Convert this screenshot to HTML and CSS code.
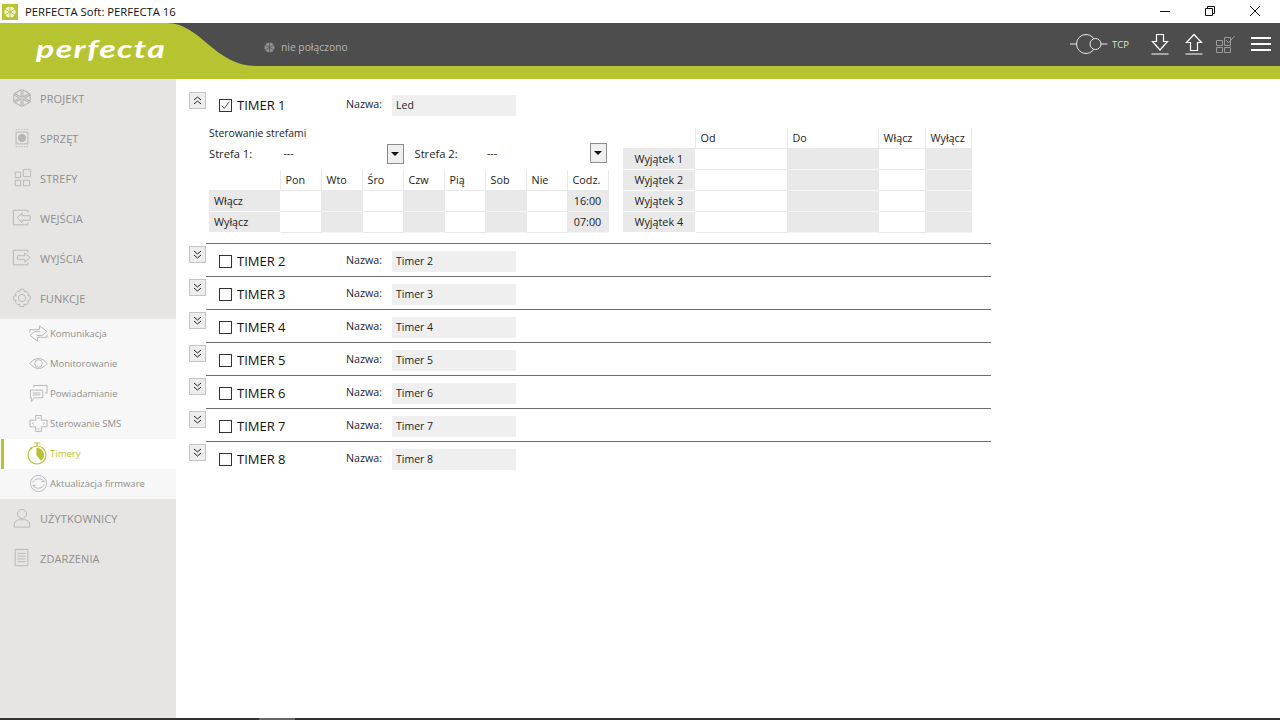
FILE: index.html
```html
<!DOCTYPE html>
<html lang="pl">
<head>
    <meta charset="UTF-8">
    <title>PERFECTA Soft: PERFECTA 16</title>
    <link rel="stylesheet" href="styles.css">
</head>
<body>
    <div class="titlebar">
        <svg class="app-icon" viewBox="0 0 16 16"><rect width="16" height="16" fill="#b7c431"/><circle cx="8" cy="8" r="5.6" fill="#f3f5d8"/><path d="M8 2v12M3 5l10 6M13 5L3 11" stroke="#b7c431" stroke-width="1"/></svg>
        <span class="title-text">PERFECTA Soft: PERFECTA 16</span>
        <div class="win-btns">
            <svg width="12" height="12" viewBox="0 0 12 12"><path d="M1 6.5h10" stroke="#111" fill="none"/></svg>
            <svg width="12" height="12" viewBox="0 0 12 12"><path d="M1.500 3.500h7v7h-7zM3.500 3.500v-2h7v7h-2" stroke="#111" fill="none"/></svg>
            <svg width="12" height="12" viewBox="0 0 12 12"><path d="M1 1l10 10M11 1L1 11" stroke="#111" fill="none"/></svg>
        </div>
    </div>

    <div class="header">
        <svg class="header-curve" width="100%" height="56" viewBox="0 0 1280 56" preserveAspectRatio="none"><path d="M0 0H167C200 0 215 43 256 43H1280V56H0Z" fill="#b7c431"/></svg>
        <div class="logo">perfecta</div>
        <div class="status">
            <svg width="11" height="11" viewBox="0 0 12 12"><circle cx="6" cy="6" r="5.500" fill="#8e8e8e"/><path d="M6 0v12M1 3l10 6M11 3L1 9" stroke="#4d4d4d" stroke-width=".7"/></svg>
            <span>nie połączono</span>
        </div>
        <div class="tools">
            <svg class="tcp-icon" width="38" height="22" viewBox="0 0 38 22" fill="none" stroke="#e8e8e8"><path d="M0 11h6"/><circle cx="16" cy="11" r="9.500"/><circle cx="25.500" cy="11" r="5.500" fill="#4d4d4d"/><path d="M31 11h6.500"/></svg>
            <span class="tcp">TCP</span>
            <svg class="tool" width="20" height="22" viewBox="0 0 20 22" fill="none" stroke="#fff" stroke-width="1.2"><path d="M6.500 1.500h7v7h4L10 17 2.500 8.500h4zM1.500 21h17"/></svg>
            <svg class="tool" width="20" height="22" viewBox="0 0 20 22" fill="none" stroke="#fff" stroke-width="1.2"><path d="M6.500 17.500h7v-8h4L10 1.500 2.500 9.500h4zM1.500 21h17"/></svg>
            <svg class="tool dim" width="20" height="18" viewBox="0 0 20 18" fill="none" stroke="#9a9a9a"><path d="M.5 5.500h6v5h-6zM.5 12.500h6v5h-6zM8.500 12.500h6v5h-6zM8.500 2.500h6v8h-6zM10 5l2.500 3 6-7" /></svg>
            <div class="burger"><i></i><i></i><i></i></div>
        </div>
    </div>

    <div class="main">
        <nav class="sidebar">
            <a class="nav-item">
                <svg viewBox="0 0 22 22" fill="none" stroke="#b5b5b5" stroke-width="1.2"><path d="M10 2L3 6l7 4zM12 2l7 4-7 4zM2 7.500v7l6-3.500zM20 7.500v7l-6-3.500zM10 12l-7 4 7 4zM12 12l7 4-7 4z"/></svg>
                PROJEKT
            </a>
            <a class="nav-item">
                <svg viewBox="0 0 22 22" fill="none" stroke="#b5b5b5"><rect x="4.500" y="4.500" width="13" height="13"/><circle cx="11" cy="11" r="4" fill="#b5b5b5"/><path d="M4 1.500h14M4 20.500h14" stroke-dasharray="1.500 1.500"/></svg>
                SPRZĘT
            </a>
            <a class="nav-item">
                <svg viewBox="0 0 22 22" fill="none" stroke="#b5b5b5"><path d="M3.500 4.500h6v6h-6zM12.500 1.500h8v8h-8zM3.500 13.500h6v6h-6zM12.500 13.500h7v6h-7z"/></svg>
                STREFY
            </a>
            <a class="nav-item">
                <svg viewBox="0 0 22 22" fill="none" stroke="#b5b5b5"><path d="M17.500 5V2.500h-16v16h16V16M6 10.500l5-5v3h9v5h-9v3z" /></svg>
                WEJŚCIA
            </a>
            <a class="nav-item">
                <svg viewBox="0 0 22 22" fill="none" stroke="#b5b5b5"><path d="M17.500 5V2.500h-16v16h16V16M6 8.500h8v-3l6 5-6 5v-3H6z"/></svg>
                WYJŚCIA
            </a>
            <a class="nav-item">
                <svg viewBox="0 0 22 22" fill="none" stroke="#b5b5b5"><circle cx="11" cy="11" r="4"/><path d="M9 1.500h4l.6 2.800 2-.9 2.700 2.700-1 2 2.700.9v4l-2.700.7 1 2.200-2.700 2.700-2-1-.6 2.800H9l-.7-2.800-2 1-2.700-2.700 1-2.200-2.700-.7v-4l2.700-.9-1-2 2.700-2.700 2 .9z"/></svg>
                FUNKCJE
            </a>
            <div class="subnav">
                <a class="sub-item">
                    <svg viewBox="0 0 20 20" fill="none" stroke="#b5b5b5"><path d="M1 9V6h10V2l8 6-5 4H8"/><path d="M19 11v3H9v4l-8-6 5-4h6"/></svg>
                    Komunikacja
                </a>
                <a class="sub-item">
                    <svg viewBox="0 0 20 20" fill="none" stroke="#b5b5b5"><path d="M1 10c5-7 13-7 18 0-5 7-13 7-18 0z"/><circle cx="10" cy="10" r="4"/></svg>
                    Monitorowanie
                </a>
                <a class="sub-item">
                    <svg viewBox="0 0 20 20" fill="none" stroke="#b5b5b5"><path d="M1.500 6.500h13v8h-9l-3 4v-4h-1zM5 3.500V1.500h14v8h-2M4 9.500h8M4 11.500h8"/></svg>
                    Powiadamianie
                </a>
                <a class="sub-item">
                    <svg viewBox="0 0 20 20" fill="none" stroke="#b5b5b5"><path d="M7 1.500h6v5h6v7h-6v5H7v-5H1v-7h6z"/><path d="M9 5l1-1.500L11 5M9 15l1 1.500 1-1.500M5 9l-1.500 1L5 11M15 9l1.500 1L15 11"/></svg>
                    Sterowanie SMS
                </a>
                <a class="sub-item active">
                    <svg viewBox="0 0 20 23" fill="none" stroke="#b7c431" stroke-width="1.200"><circle cx="10" cy="13" r="9"/><path d="M7 1h6M10 1v3M3.500 5.500l1.500 1.500"/><path d="M10 6.500a6.500 6.500 0 0 1 4 11.500L10 13z" fill="#b7c431"/></svg>
                    Timery
                </a>
                <a class="sub-item">
                    <svg viewBox="0 0 20 20" fill="none" stroke="#b5b5b5"><circle cx="10" cy="10" r="8.500"/><path d="M4 9c1-4 9-6 12-1l-3 0M16 11c-1 4-9 6-12 1l3 0"/></svg>
                    Aktualizacja firmware
                </a>
            </div>
            <a class="nav-item">
                <svg viewBox="0 0 22 22" fill="none" stroke="#b5b5b5"><circle cx="11" cy="6.500" r="5"/><path d="M2.500 21v-3c0-3 3-5 5-5h7c2 0 5 2 5 5v3z"/></svg>
                UŻYTKOWNICY
            </a>
            <a class="nav-item">
                <svg viewBox="0 0 22 22" fill="none" stroke="#b5b5b5"><path d="M3.500 1.500h14v18h-14zM6 6h9M6 9h9M6 12h9M6 15h9"/></svg>
                ZDARZENIA
            </a>
        </nav>

        <section class="content">
            <div class="timer open">
                <div class="toggle">
                    <svg viewBox="0 0 9 9" fill="none" stroke="#222"><path d="M1 4l3.500-3L8 4M1 8l3.500-3L8 8"/></svg>
                </div>
                <div class="timer-body">
                    <div class="timer-head first">
                        <span class="check on"><svg viewBox="0 0 13 13" fill="none" stroke="#333"><path d="M2 6.500l3 3.500 6-8"/></svg></span>
                        <span class="timer-name">TIMER 1</span>
                        <span class="name-label">Nazwa:</span>
                        <span class="name-input">Led</span>
                    </div>
                    <div class="details">
                        <div class="zones">
                            <div class="zones-title">Sterowanie strefami</div>
                            <div class="zone-row">
                                <span class="zone-label">Strefa 1:</span>
                                <span class="zone-value">---</span>
                                <span class="drop"></span>
                                <span class="zone-label second">Strefa 2:</span>
                                <span class="zone-value">---</span>
                                <span class="drop up"></span>
                            </div>
                            <table class="grid week">
                                <tr><th></th><th>Pon</th><th>Wto</th><th>Śro</th><th>Czw</th><th>Pią</th><th>Sob</th><th>Nie</th><th>Codz.</th></tr>
                                <tr><td class="lbl">Włącz</td><td></td><td class="g"></td><td></td><td class="g"></td><td></td><td class="g"></td><td></td><td class="g tc">16:00</td></tr>
                                <tr><td class="lbl">Wyłącz</td><td></td><td class="g"></td><td></td><td class="g"></td><td></td><td class="g"></td><td></td><td class="g tc">07:00</td></tr>
                            </table>
                        </div>
                        <table class="grid except">
                            <tr><th></th><th>Od</th><th>Do</th><th>Włącz</th><th>Wyłącz</th></tr>
                            <tr><td class="lbl tc">Wyjątek 1</td><td></td><td class="g"></td><td></td><td class="g"></td></tr>
                            <tr><td class="lbl tc">Wyjątek 2</td><td></td><td class="g"></td><td></td><td class="g"></td></tr>
                            <tr><td class="lbl tc">Wyjątek 3</td><td></td><td class="g"></td><td></td><td class="g"></td></tr>
                            <tr><td class="lbl tc">Wyjątek 4</td><td></td><td class="g"></td><td></td><td class="g"></td></tr>
                        </table>
                    </div>
                </div>
            </div>

            <div class="timer"><div class="toggle"><svg viewBox="0 0 9 9" fill="none" stroke="#222"><path d="M1 1l3.500 3L8 1M1 5l3.500 3L8 5"/></svg></div><div class="timer-body"><div class="timer-head"><span class="check"></span><span class="timer-name">TIMER 2</span><span class="name-label">Nazwa:</span><span class="name-input">Timer 2</span></div></div></div>
            <div class="timer"><div class="toggle"><svg viewBox="0 0 9 9" fill="none" stroke="#222"><path d="M1 1l3.500 3L8 1M1 5l3.500 3L8 5"/></svg></div><div class="timer-body"><div class="timer-head"><span class="check"></span><span class="timer-name">TIMER 3</span><span class="name-label">Nazwa:</span><span class="name-input">Timer 3</span></div></div></div>
            <div class="timer"><div class="toggle"><svg viewBox="0 0 9 9" fill="none" stroke="#222"><path d="M1 1l3.500 3L8 1M1 5l3.500 3L8 5"/></svg></div><div class="timer-body"><div class="timer-head"><span class="check"></span><span class="timer-name">TIMER 4</span><span class="name-label">Nazwa:</span><span class="name-input">Timer 4</span></div></div></div>
            <div class="timer"><div class="toggle"><svg viewBox="0 0 9 9" fill="none" stroke="#222"><path d="M1 1l3.500 3L8 1M1 5l3.500 3L8 5"/></svg></div><div class="timer-body"><div class="timer-head"><span class="check"></span><span class="timer-name">TIMER 5</span><span class="name-label">Nazwa:</span><span class="name-input">Timer 5</span></div></div></div>
            <div class="timer"><div class="toggle"><svg viewBox="0 0 9 9" fill="none" stroke="#222"><path d="M1 1l3.500 3L8 1M1 5l3.500 3L8 5"/></svg></div><div class="timer-body"><div class="timer-head"><span class="check"></span><span class="timer-name">TIMER 6</span><span class="name-label">Nazwa:</span><span class="name-input">Timer 6</span></div></div></div>
            <div class="timer"><div class="toggle"><svg viewBox="0 0 9 9" fill="none" stroke="#222"><path d="M1 1l3.500 3L8 1M1 5l3.500 3L8 5"/></svg></div><div class="timer-body"><div class="timer-head"><span class="check"></span><span class="timer-name">TIMER 7</span><span class="name-label">Nazwa:</span><span class="name-input">Timer 7</span></div></div></div>
            <div class="timer last"><div class="toggle"><svg viewBox="0 0 9 9" fill="none" stroke="#222"><path d="M1 1l3.500 3L8 1M1 5l3.500 3L8 5"/></svg></div><div class="timer-body"><div class="timer-head"><span class="check"></span><span class="timer-name">TIMER 8</span><span class="name-label">Nazwa:</span><span class="name-input">Timer 8</span></div></div></div>
        </section>
    </div>

    <div class="taskbar"><i></i></div>
</body>
</html>
```

FILE: styles.css
```css
* { box-sizing: border-box; }
html, body { height: 100%; }
body {
    margin: 0;
    font-family: "Open Sans", "Noto Sans", sans-serif;
    font-size: 11px;
    color: #222;
    background: #fff;
    display: flex;
    flex-direction: column;
    overflow: hidden;
}

/* window title */
.titlebar {
    height: 23px;
    display: flex;
    align-items: center;
    padding-left: 2px;
    flex: none;
}
.app-icon { width: 16px; height: 16px; margin-right: 7px; }
.title-text { font-size: 11.3px; color: #111; }
.win-btns {
    margin-left: auto;
    display: flex;
    gap: 33px;
    padding: 0 19px 2px 0;
}

/* header */
.header {
    position: relative;
    height: 56px;
    flex: none;
    background: #4d4d4d;
}
.header-curve { position: absolute; left: 0; top: 0; }
.logo {
    position: absolute;
    left: 36px;
    top: 10px;
    font-family: "Lato", sans-serif;
    font-size: 25px;
    font-style: italic;
    font-weight: 700;
    letter-spacing: 1px;
    color: #fff;
    transform: scaleX(1.36);
    transform-origin: left center;
}
.status {
    position: absolute;
    left: 264px;
    top: 17px;
    display: flex;
    align-items: center;
    gap: 6px;
    font-size: 10.3px;
    color: #b5b5b5;
}
.tools {
    position: absolute;
    right: 9px;
    top: 9px;
    height: 24px;
    display: flex;
    align-items: center;
}
.tcp { font-size: 9.5px; color: #dfe6b8; margin: 0 20px 0 4px; width: 18px; }
.tool { margin-right: 14px; }
.tool.dim { margin-right: 15px; margin-left: -2px; }
.burger { display: flex; flex-direction: column; gap: 4px; width: 20px; }
.burger i { display: block; height: 2px; background: #fff; }

/* sidebar */
.main { flex: 1; display: flex; min-height: 0; }
.sidebar {
    width: 176px;
    flex: none;
    background: #e6e5e3;
}
.nav-item {
    height: 40px;
    display: flex;
    align-items: center;
    gap: 8px;
    padding: 0 0 2px 12px;
    font-size: 11px;
    letter-spacing: .1px;
    color: #8f8f8f;
}
.nav-item svg { width: 20px; height: 20px; flex: none; }
.subnav { background: #f7f7f7; }
.sub-item {
    height: 30px;
    display: flex;
    align-items: center;
    gap: 2px;
    padding: 0 0 2px 29px;
    font-size: 9.5px;
    color: #8f8f8f;
}
.sub-item svg { width: 19px; height: 19px; flex: none; }
.sub-item.active {
    background: #fff;
    color: #b7c431;
    box-shadow: inset 3px 0 0 #b7c431;
    margin-left: 1px;
    padding-left: 26px;
    gap: 3px;
}
.sub-item.active svg { width: 20px; height: 23px; }

/* timers */
.content { flex: 1; padding: 13px 0 0 13px; }
.timer { display: flex; align-items: flex-start; }
.toggle {
    width: 17px;
    height: 17px;
    flex: none;
    border: 1px solid #c4c4c4;
    background: #ededed;
    display: flex;
    align-items: center;
    justify-content: center;
}
.toggle svg { width: 9px; height: 9px; }
.timer-body {
    width: 785px;
    height: 33px;
    border-bottom: 1px solid #6e6e6e;
}
.timer.open .timer-body { height: 152px; }
.timer.last .timer-body { border-bottom: 0; }
.timer + .timer .toggle { margin-top: 2px; }
.timer-head {
    display: flex;
    align-items: center;
    height: 21px;
    margin-top: 7px;
    padding-left: 13px;
}
.timer-head.first { margin-top: 3px; }
.check {
    width: 13px;
    height: 13px;
    border: 1px solid #333;
    display: flex;
    flex: none;
    margin-bottom: 1px;
}
.check svg { width: 11px; height: 11px; }
.timer-name { font-size: 13px; color: #111; margin: 0 0 2px 5px; width: 109px; }
.name-label { font-size: 10.7px; color: #223; width: 46px; margin-bottom: 4px; }
.name-input {
    width: 124px;
    height: 21px;
    background: #efefef;
    padding-left: 4px;
    line-height: 21px;
    font-size: 10.5px;
}

/* zone and exception grids */
.details { display: flex; align-items: flex-end; padding-left: 3px; }
.zones { width: 398px; margin-right: 16px; }
.zones-title { font-size: 10.4px; line-height: 14px; margin-top: 10px; }
.zone-row {
    display: flex;
    align-items: center;
    height: 20px;
    margin: 4px 0 6px;
    font-size: 11.2px;
}
.zone-label { width: 75px; padding-bottom: 2px; }
.zone-label.second { width: 73px; margin-left: 11px; }
.zone-value { width: 104px; font-size: 10.5px; padding-bottom: 2px; }
.drop {
    width: 17px;
    height: 20px;
    border: 1px solid #8c8c8c;
    background: #efefef;
    position: relative;
    flex: none;
}
.drop.up { margin-top: -2px; }
.drop::after {
    content: "";
    position: absolute;
    left: 3px;
    top: 7px;
    border-left: 4px solid transparent;
    border-right: 4px solid transparent;
    border-top: 4px solid #111;
}
.grid {
    border-collapse: collapse;
    table-layout: fixed;
    font-size: 10.8px;
}
.grid th, .grid td {
    height: 21px;
    padding: 0;
    border: 0;
    border-right: 1px solid #e8e8e8;
    border-bottom: 1px solid #e8e8e8;
    font-weight: 400;
    text-align: left;
}
.grid th { height: 20px; padding-left: 5px; }
.grid .g, .grid .lbl { background: #e9e9e9; }
.grid .lbl { padding-left: 5px; border-color: #fff; }
.grid td.g { border-bottom-color: #f4f4f4; }
.grid .tc { text-align: center; padding: 0; }
.week { width: 398px; }
.week th { width: 41px; }
.week th:nth-child(1) { width: 71px; }
.except { width: 348px; }
.except th:nth-child(1) { width: 72px; }
.except th:nth-child(2) { width: 92px; }
.except th:nth-child(3) { width: 91px; }
.except th:nth-child(4) { width: 47px; }
.except th:nth-child(5) { width: 46px; }

.taskbar { height: 2px; flex: none; background: #333; }
.taskbar i { display: block; width: 36px; height: 2px; margin-left: 259px; background: #666; }
```
